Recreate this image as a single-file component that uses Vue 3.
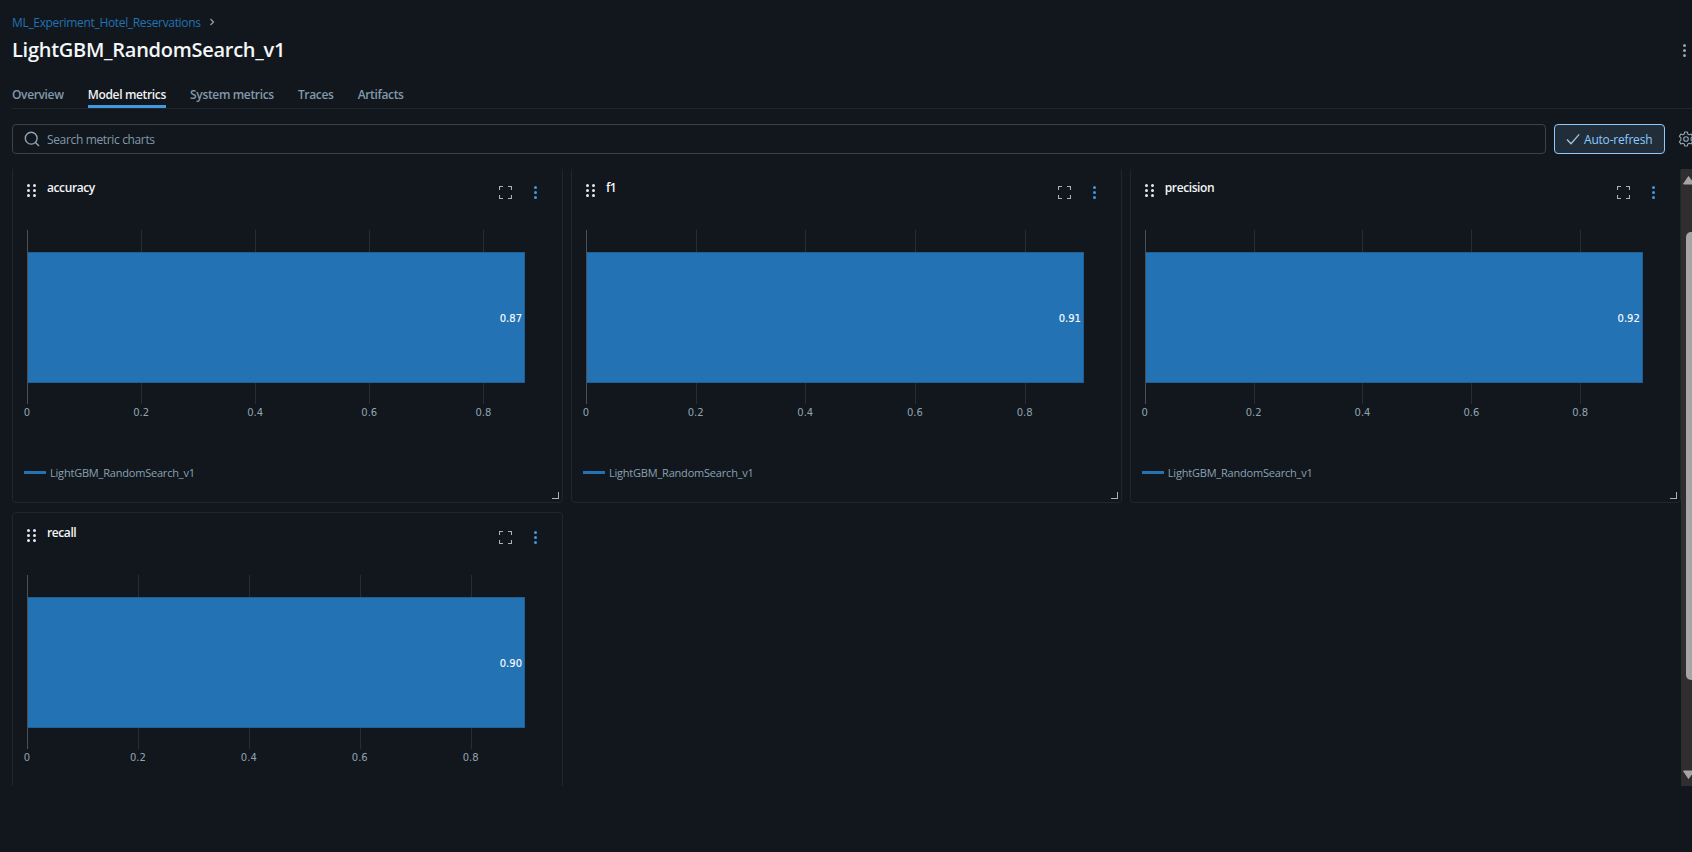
<script setup>
const tabs = ["Overview", "Model metrics", "System metrics", "Traces", "Artifacts"];

const charts = [
  { name: "accuracy", max: 0.873, label: "0.87" },
  { name: "f1", max: 0.908, label: "0.91" },
  { name: "precision", max: 0.915, label: "0.92" },
  { name: "recall", max: 0.898, label: "0.90" },
];

const ticks = [0, 0.2, 0.4, 0.6, 0.8];
const runName = "LightGBM_RandomSearch_v1";

function tickLeft(chart, t) {
  return (t / chart.max) * 100 + "%";
}
</script>

<template>
  <div class="page">
    <div class="crumb">
      <a class="crumb-link">ML_Experiment_Hotel_Reservations</a>
      <svg class="crumb-arrow" width="8" height="8" viewBox="0 0 8 8">
        <path d="M2.5 1 L5.5 4 L2.5 7" fill="none" stroke="#92a4b3" stroke-width="1.2" />
      </svg>
    </div>
    <div class="title-row">
      <h1 class="title">{{ runName }}</h1>
      <div class="page-kebab"><i></i><i></i><i></i></div>
    </div>

    <div class="tabs">
      <span v-for="t in tabs" :key="t" class="tab" :class="{ active: t === 'Model metrics' }">{{ t }}</span>
    </div>

    <div class="toolbar">
      <div class="search">
        <svg width="16" height="16" viewBox="0 0 16 16" fill="none" stroke="#92a4b3" stroke-width="1.4">
          <circle cx="7.2" cy="7.2" r="5.9" />
          <path d="M11.5 11.5 L15 15" />
        </svg>
        <span>Search metric charts</span>
      </div>
      <button class="refresh">
        <svg width="14" height="14" viewBox="0 0 14 14" fill="none" stroke="#a9c6dc" stroke-width="1.3">
          <path d="M1 7.5 L5 11.8 L13.2 2.4" />
        </svg>
        Auto-refresh
      </button>
      <svg class="gear" width="16" height="16" viewBox="0 0 16 16" fill="none" stroke="#92a4b3" stroke-width="1.1">
        <circle cx="8" cy="8" r="2.3" />
        <path d="M6.7 1 H9.3 L9.8 3 L11.3 3.8 L13.2 3.1 L14.6 5.4 L13.1 6.8 V9.2 L14.6 10.6 L13.2 12.9 L11.3 12.2 L9.8 13 L9.3 15 H6.7 L6.2 13 L4.7 12.2 L2.8 12.9 L1.4 10.6 L2.9 9.2 V6.8 L1.4 5.4 L2.8 3.1 L4.7 3.8 L6.2 3 Z" stroke-linejoin="round" />
      </svg>
    </div>

    <div class="scroller">
      <div class="grid">
        <div v-for="c in charts" :key="c.name" class="card">
          <div class="card-head">
            <div class="drag">
              <i v-for="n in 6" :key="n"></i>
            </div>
            <span class="card-title">{{ c.name }}</span>
            <svg class="expand" width="13" height="13" viewBox="0 0 13 13" fill="none" stroke="#a3b3c0" stroke-width="1.1">
              <path d="M0.5 4 V0.5 H4 M9 0.5 H12.5 V4 M12.5 9 V12.5 H9 M4 12.5 H0.5 V9" />
            </svg>
            <div class="kebab"><i></i><i></i><i></i></div>
          </div>

          <div class="plot">
            <template v-for="t in ticks" :key="t">
              <span class="tick" :class="{ zero: t === 0 }" :style="{ left: tickLeft(c, t) }"></span>
              <span class="tick-label" :style="{ left: tickLeft(c, t) }">{{ t }}</span>
            </template>
            <div class="bar"><span>{{ c.label }}</span></div>
          </div>

          <div class="legend">
            <span class="legend-line"></span>
            <span>{{ runName }}</span>
          </div>
          <span class="resize"></span>
        </div>
      </div>
      <div class="scrollbar">
        <svg class="arrow" width="11" height="10" viewBox="0 0 11 10"><path d="M6.5 1.5 L12 9 H1.5 Z" fill="#a5a5a5" stroke="#a5a5a5" stroke-linejoin="round" /></svg>
        <div class="thumb"></div>
        <svg class="arrow arrow-down" width="11" height="10" viewBox="0 0 11 10"><path d="M1.5 1 H12 L6.5 8.5 Z" fill="#a5a5a5" stroke="#a5a5a5" stroke-linejoin="round" /></svg>
      </div>
    </div>
  </div>
</template>

<style>
html,
body {
  margin: 0;
  background: #11171c;
  overflow: hidden;
}
</style>

<style scoped>
.page {
  width: 1692px;
  height: 852px;
  overflow: hidden;
  box-sizing: border-box;
  background: #11171c;
  padding: 13px 0 0 12px;
  font-family: "Open Sans", "Noto Sans", sans-serif;
  color: #e8ecf0;
}
.crumb {
  display: flex;
  align-items: center;
  gap: 7px;
  height: 18px;
  font-size: 12px;
}
.crumb-link {
  color: #2272b4;
  letter-spacing: -0.33px;
}
.title-row {
  display: flex;
  align-items: center;
  justify-content: space-between;
  height: 32px;
  margin-top: 3px;
}
.title {
  margin: 0;
  font-size: 20px;
  line-height: 28px;
  font-weight: 600;
  color: #f4f6f8;
  letter-spacing: -0.27px;
}
.page-kebab {
  display: flex;
  flex-direction: column;
  gap: 2px;
  margin-right: 6px;
}
.page-kebab i {
  width: 3px;
  height: 3px;
  border-radius: 50%;
  background: #92a4b3;
}
.tabs {
  display: flex;
  gap: 24.2px;
  height: 26px;
  margin-top: 16px;
  border-bottom: 1px solid #1f272d;
}
.tab {
  font-size: 12px;
  font-weight: 600;
  line-height: 20px;
  height: 26px;
  padding-top: 3px;
  color: #8299ab;
  box-sizing: border-box;
  letter-spacing: -0.35px;
}
.tab.active {
  color: #eef1f4;
  border-bottom: 3px solid #4299e0;
}
.toolbar {
  display: flex;
  align-items: center;
  gap: 8px;
  width: 1700px;
  margin-top: 15px;
}
.search {
  display: flex;
  align-items: center;
  gap: 7px;
  width: 1534px;
  height: 30px;
  box-sizing: border-box;
  padding-left: 11px;
  border: 1px solid #37444f;
  border-radius: 4px;
  font-size: 12px;
  color: #8299ab;
  letter-spacing: -0.35px;
}
.refresh {
  display: flex;
  align-items: center;
  gap: 4px;
  width: 111px;
  height: 30px;
  box-sizing: border-box;
  padding: 0 0 0 11px;
  border: 1px solid #8acaff;
  border-radius: 4px;
  background: #212e3a;
  color: #8acaff;
  font-family: inherit;
  font-size: 12px;
  letter-spacing: -0.2px;
}
.gear {
  margin-left: 5px;
}
.scroller {
  display: flex;
  height: 617px;
  margin-top: 15px;
  overflow: hidden;
}
.grid {
  display: grid;
  grid-template-columns: repeat(3, 1fr);
  grid-auto-rows: 336px;
  gap: 9px 8px;
  width: 1668.7px;
  flex: none;
  margin-top: -2px;
}
.card {
  position: relative;
  box-sizing: border-box;
  border: 1px solid #1f272d;
  border-radius: 4px;
  padding: 0 14px;
}
.card-head {
  position: relative;
  display: flex;
  align-items: flex-start;
  height: 62px;
  padding-top: 12px;
  box-sizing: border-box;
}
.drag {
  display: grid;
  grid-template-columns: 3px 3px;
  gap: 2px 3px;
  margin-top: 4px;
  width: 9px;
}
.drag i {
  width: 3px;
  height: 3px;
  background: #e3e8ec;
  border-radius: 50%;
}
.card-title {
  margin-left: 11px;
  font-size: 12px;
  line-height: 16px;
  font-weight: 600;
  color: #f4f6f8;
  letter-spacing: -0.4px;
}
.expand {
  margin-left: auto;
  margin-top: 6px;
  margin-right: 22px;
}
.kebab {
  display: flex;
  flex-direction: column;
  gap: 2px;
  margin-top: 6px;
  margin-right: 11px;
}
.kebab i {
  width: 3px;
  height: 3px;
  border-radius: 50%;
  background: #4299e0;
}
.plot {
  position: relative;
  width: 498px;
  height: 174px;
  font-family: "DejaVu Sans", sans-serif;
}
.tick {
  position: absolute;
  top: 0;
  bottom: 0;
  width: 1px;
  background: #262d33;
}
.tick.zero {
  background: #4a5054;
}
.tick-label {
  position: absolute;
  top: 176px;
  transform: translateX(-50%);
  font-size: 10px;
  line-height: 14px;
  color: #92a4b3;
}
.bar {
  position: absolute;
  top: 22px;
  left: 1px;
  right: 0;
  height: 131px;
  box-sizing: border-box;
  display: flex;
  align-items: center;
  justify-content: flex-end;
  padding: 2px 2px 0 0;
  background: #2272b4;
  border: 1px solid #1f5f93;
  border-left: none;
  font-size: 10px;
  color: #fff;
  -webkit-text-stroke: 0.1px #fff;
}
.legend {
  display: flex;
  align-items: center;
  gap: 4px;
  height: 16px;
  margin: 60px 0 0 -3px;
  font-size: 11px;
  color: #8ba1b3;
  letter-spacing: -0.2px;
}
.legend-line {
  width: 22px;
  height: 3px;
  background: #2272b4;
}
.resize {
  position: absolute;
  right: 3px;
  bottom: 3px;
  width: 6px;
  height: 6px;
  border-right: 1px solid #a3b3c0;
  border-bottom: 1px solid #a3b3c0;
}
.scrollbar {
  display: flex;
  flex-direction: column;
  flex: none;
  width: 12px;
  height: 100%;
  background: #2e2e2e;
  padding-left: 1px;
  box-sizing: border-box;
}
.arrow {
  display: block;
  margin-top: 6px;
  flex: none;
}
.thumb {
  width: 11px;
  height: 448px;
  margin: 47px 0 0 4px;
  background: #a5a5a5;
  border-radius: 5px 0 0 5px;
}
.arrow-down {
  margin-top: 90px;
}
</style>
